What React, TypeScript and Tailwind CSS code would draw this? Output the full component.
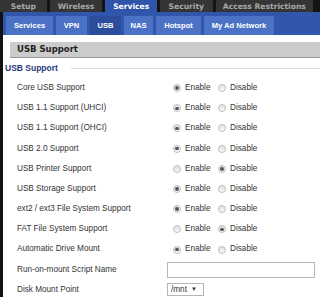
import React from "react";

const topTabs = [
  { label: "Setup", w: "w-[47px]" },
  { label: "Wireless", w: "w-[53px]" },
  { label: "Services", w: "w-[52px]", active: true },
  { label: "Security", w: "w-[53px]" },
  { label: "Access Restrictions", w: "w-[98px]" },
];

const subTabs = [
  { label: "Services", w: "w-[47px]" },
  { label: "VPN", w: "w-[31px]" },
  { label: "USB", w: "w-[31px]", active: true },
  { label: "NAS", w: "w-[29px]" },
  { label: "Hotspot", w: "w-[45px]" },
  { label: "My Ad Network", w: "w-[70px]" },
];

const radioRows: { label: string; on: boolean }[] = [
  { label: "Core USB Support", on: true },
  { label: "USB 1.1 Support (UHCI)", on: true },
  { label: "USB 1.1 Support (OHCI)", on: true },
  { label: "USB 2.0 Support", on: true },
  { label: "USB Printer Support", on: false },
  { label: "USB Storage Support", on: true },
  { label: "ext2 / ext3 File System Support", on: true },
  { label: "FAT File System Support", on: false },
  { label: "Automatic Drive Mount", on: true },
];

const Radio = ({ checked }: { checked: boolean }) => (
  <span className="flex h-[8px] w-[8px] items-center justify-center rounded-full border border-[#bdbdbd] bg-gradient-to-b from-[#e0e0e0] to-[#fafafa]">
    {checked && <span className="h-[3.5px] w-[3.5px] rounded-full bg-[#555]" />}
  </span>
);

const App = () => {
  return (
    <div className="h-[297px] w-[320px] overflow-hidden bg-white font-['Liberation_Sans',Arial,sans-serif] text-[8.2px] text-[#333]">
      <div className="flex h-[12px] shrink-0 items-end gap-[3px] bg-[#141414] pr-[7px]">
        {topTabs.map((t) => (
          <div
            key={t.label}
            className={`${t.w} flex h-[12px] items-end justify-center pb-[1px] font-['DejaVu_Sans',sans-serif] text-[7.6px] font-bold leading-none ${
              t.active ? "bg-[#2f55ab] text-white" : "bg-[#353535] text-[#a9a9a9]"
            }`}
          >
            {t.label}
          </div>
        ))}
      </div>
      <div className="flex h-[285px]">
        <div className="w-[3px] shrink-0 bg-[#111]" />
        <div className="flex flex-1 flex-col">
          <div className="flex h-[23px] shrink-0 items-end gap-[3px] bg-[#3157ad] pl-[3px]">
            {subTabs.map((t) => (
              <div
                key={t.label}
                className={`${t.w} flex h-[19px] items-center justify-center text-[7.6px] font-bold text-white ${
                  t.active ? "bg-[#2c4d9c]" : "bg-[#4c72c6]"
                }`}
              >
                {t.label}
              </div>
            ))}
          </div>
          <div className="flex flex-col pt-[7px]">
            <div className="ml-[7px] flex h-[16px] shrink-0 items-center border-b border-[#999] bg-[#cccccc] pl-[7px] font-['DejaVu_Sans',sans-serif] text-[8.5px] font-bold text-[#222]">
              USB Support
            </div>
            <div className="mt-[4px] flex h-[12px] shrink-0 items-center gap-[13px] pl-[2px]">
              <span className="text-[8.5px] font-bold text-[#2a3b7d]">USB Support</span>
              <span className="h-px flex-1 bg-[#dcdcdc]" />
            </div>
            <div className="flex flex-col pt-[4px]">
              {radioRows.map((r) => (
                <div key={r.label} className="flex h-[20.2px] shrink-0 items-center">
                  <span className="w-[169px] pl-[14px]">{r.label}</span>
                  <span className="flex w-[45px] items-center gap-[4px] pl-[1px]">
                    <Radio checked={r.on} />
                    Enable
                  </span>
                  <span className="flex items-center gap-[4px] pl-[1px]">
                    <Radio checked={!r.on} />
                    Disable
                  </span>
                </div>
              ))}
              <div className="flex h-[20.2px] shrink-0 items-center">
                <span className="w-[164px] pl-[14px]">Run-on-mount Script Name</span>
                <span className="h-[16px] w-[148px] border border-[#b5b5b5] bg-white" />
              </div>
              <div className="flex h-[20.2px] shrink-0 items-center">
                <span className="w-[164px] pl-[14px]">Disk Mount Point</span>
                <span className="flex h-[13px] w-[37px] items-center gap-[4px] border border-[#b5b5b5] bg-white pl-[3px] text-[#333]">
                  /mnt <span className="text-[6px]">▼</span>
                </span>
              </div>
            </div>
          </div>
        </div>
      </div>
    </div>
  );
};

export default App;
